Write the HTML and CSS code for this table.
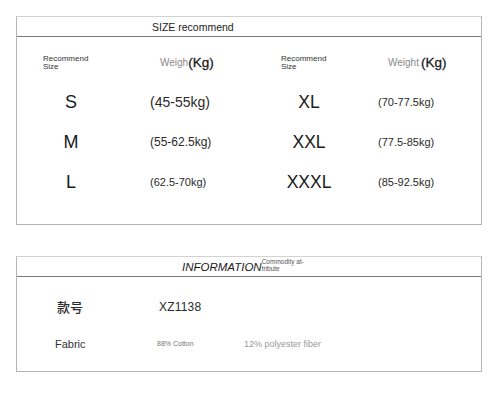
FILE: index.html
```html
<!DOCTYPE html>
<html>
<head>
<meta charset="utf-8">
<link rel="stylesheet" href="styles.css">
</head>
<body>
<div class="page">
  <section class="box size-box">
    <div class="box-head size-head">SIZE recommend</div>
    <div class="size-grid">
      <div class="c1 lbl">Recommend<br>Size</div>
      <div class="c2 wlbl"><span class="wg">Weigh</span><span class="kg">(Kg)</span></div>
      <div class="c3 lbl">Recommend<br>Size</div>
      <div class="c4 wlbl"><span class="wg">Weight</span><span class="kg kg2">(Kg)</span></div>

      <div class="c1 sz">S</div>
      <div class="c2 val v14">(45-55kg)</div>
      <div class="c3 sz">XL</div>
      <div class="c4 val">(70-77.5kg)</div>

      <div class="c1 sz">M</div>
      <div class="c2 val v12">(55-62.5kg)</div>
      <div class="c3 sz">XXL</div>
      <div class="c4 val">(77.5-85kg)</div>

      <div class="c1 sz">L</div>
      <div class="c2 val">(62.5-70kg)</div>
      <div class="c3 sz">XXXL</div>
      <div class="c4 val">(85-92.5kg)</div>
    </div>
  </section>

  <section class="box info-box">
    <div class="box-head info-head"><span class="info-title">INFORMATION</span><span class="info-sub">Commodity at-<br>tribute</span></div>
    <div class="info-grid">
      <div class="i1 cn">款号</div>
      <div class="i2 code">XZ1138</div>
      <div class="i3"></div>
      <div class="i1 fab">Fabric</div>
      <div class="i2 cot">88% Cotton</div>
      <div class="i3 poly">12% polyester fiber</div>
    </div>
  </section>
</div>
</body>
</html>
```

FILE: styles.css
```css
html, body {
  margin: 0;
  padding: 0;
  background: #fff;
}
body {
  font-family: "Liberation Sans", Arial, sans-serif;
  color: #222;
  width: 500px;
  height: 406px;
  overflow: hidden;
}
.page {
  padding: 16px 0 0 16px;
  display: flex;
  flex-direction: column;
  gap: 31px;
}
.box {
  width: 464px;
  border: 1px solid #b4b4b4;
  border-top-color: #d2d2d2;
}
.box-head {
  height: 19px;
  border-bottom: 1px solid #7c7c7c;
  display: flex;
  align-items: center;
  box-sizing: content-box;
}
.size-head {
  padding-left: 135px;
  padding-top: 1px;
  height: 18px;
  font-size: 10.5px;
  color: #222;
}
.size-grid {
  display: grid;
  grid-template-columns: 108px 140px 88px 1fr;
  grid-auto-rows: 40px;
  padding: 5px 0 22px;
  align-items: center;
}
.lbl {
  font-size: 8px;
  line-height: 8px;
  color: #333;
  padding-top: 2px;
}
.c1.lbl { padding-left: 26px; }
.c3.lbl { padding-left: 16px; }
.wlbl {
  padding-left: 35px;
  display: flex;
  align-items: center;
  white-space: nowrap;
}
.wg {
  font-size: 10px;
  color: #8a8a8a;
}
.kg {
  font-size: 13.5px;
  color: #1a1a1a;
  -webkit-text-stroke: 0.3px #1a1a1a;
}
.kg2 { margin-left: 2px; }
.sz {
  text-align: center;
  font-size: 18px;
  color: #1a1a1a;
}
.c3.sz { font-size: 17.5px; }
.val {
  padding-left: 25px;
  font-size: 11px;
  color: #2a2a2a;
}
.v14 { font-size: 14px; }
.v12 { font-size: 12px; }

.info-head {
  padding-left: 165px;
  align-items: flex-start;
}
.info-title {
  font-style: italic;
  font-size: 11.5px;
  color: #1a1a1a;
  margin-top: 4px;
}
.info-sub {
  font-size: 6.5px;
  line-height: 6.5px;
  color: #555;
  margin-top: 2px;
}
.info-grid {
  display: grid;
  grid-template-columns: 139px 87px 1fr;
  grid-auto-rows: 37px;
  padding: 11px 0 9px;
  align-items: center;
}
.cn {
  padding-left: 40px;
  font-family: "Noto Sans CJK SC", sans-serif;
  font-size: 13px;
  font-weight: 500;
  color: #2a2a2a;
}
.code {
  padding-left: 3px;
  font-size: 12px;
  letter-spacing: 0.2px;
  color: #2a2a2a;
}
.fab {
  padding-left: 38px;
  font-size: 11px;
  color: #333;
}
.cot {
  padding-left: 1px;
  font-size: 7px;
  color: #777;
}
.poly {
  padding-left: 1px;
  font-size: 9px;
  color: #9a9a9a;
}
```
